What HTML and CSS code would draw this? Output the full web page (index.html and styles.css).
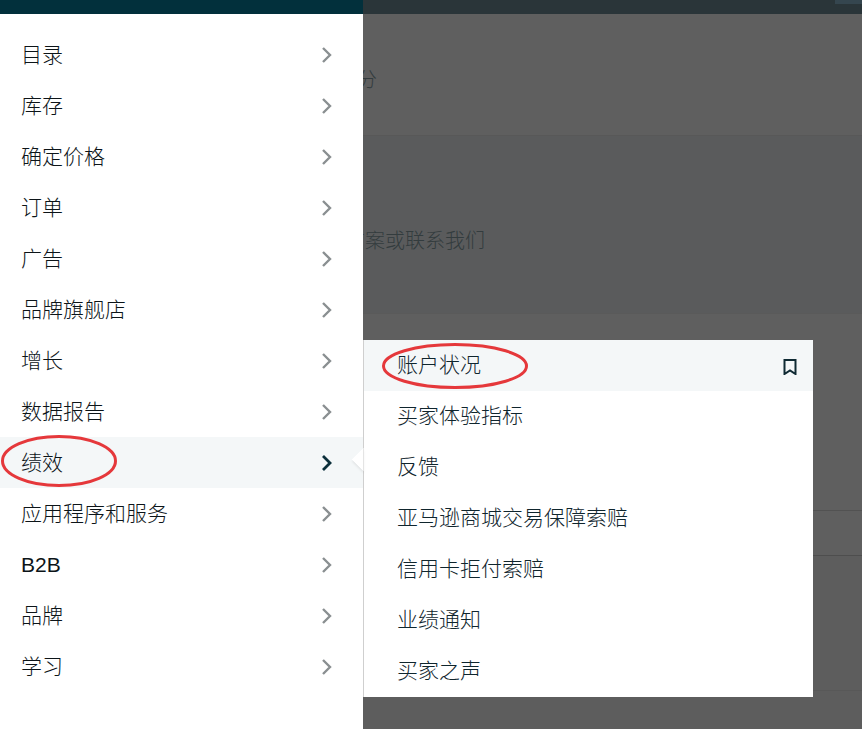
FILE: index.html
```html
<!DOCTYPE html>
<html lang="zh-CN">
<head>
<meta charset="utf-8">
<title>绩效</title>
<link rel="stylesheet" href="styles.css">
</head>
<body>
<div class="page">
  <header class="topbar"><span class="topbar-tab"></span></header>
  <section class="band band-title"><p class="page-text">绩效得分</p></section>
  <section class="band band-help"><p class="page-text">解决方案或联系我们</p></section>
  <section class="band band-plain"></section>
  <section class="band band-row"></section>
  <section class="band band-table"></section>
  <section class="band band-end"></section>
</div>

<nav class="drawer">
  <div class="drawer-cap"></div>
  <ul class="menu">
    <li class="menu-row"><span>目录</span><svg class="chev" viewBox="0 0 12 18"><path d="M2 2l7 7-7 7"/></svg></li>
    <li class="menu-row"><span>库存</span><svg class="chev" viewBox="0 0 12 18"><path d="M2 2l7 7-7 7"/></svg></li>
    <li class="menu-row"><span>确定价格</span><svg class="chev" viewBox="0 0 12 18"><path d="M2 2l7 7-7 7"/></svg></li>
    <li class="menu-row"><span>订单</span><svg class="chev" viewBox="0 0 12 18"><path d="M2 2l7 7-7 7"/></svg></li>
    <li class="menu-row"><span>广告</span><svg class="chev" viewBox="0 0 12 18"><path d="M2 2l7 7-7 7"/></svg></li>
    <li class="menu-row"><span>品牌旗舰店</span><svg class="chev" viewBox="0 0 12 18"><path d="M2 2l7 7-7 7"/></svg></li>
    <li class="menu-row"><span>增长</span><svg class="chev" viewBox="0 0 12 18"><path d="M2 2l7 7-7 7"/></svg></li>
    <li class="menu-row"><span>数据报告</span><svg class="chev" viewBox="0 0 12 18"><path d="M2 2l7 7-7 7"/></svg></li>
    <li class="menu-row is-active"><span>绩效</span><svg class="chev" viewBox="0 0 12 18"><path d="M2 2l7 7-7 7"/></svg></li>
    <li class="menu-row"><span>应用程序和服务</span><svg class="chev" viewBox="0 0 12 18"><path d="M2 2l7 7-7 7"/></svg></li>
    <li class="menu-row"><span>B2B</span><svg class="chev" viewBox="0 0 12 18"><path d="M2 2l7 7-7 7"/></svg></li>
    <li class="menu-row"><span>品牌</span><svg class="chev" viewBox="0 0 12 18"><path d="M2 2l7 7-7 7"/></svg></li>
    <li class="menu-row"><span>学习</span><svg class="chev" viewBox="0 0 12 18"><path d="M2 2l7 7-7 7"/></svg></li>
  </ul>
</nav>

<div class="flyout">
  <span class="notch"></span>
  <ul class="submenu">
    <li class="sub-row is-active"><span>账户状况</span><svg class="mark" viewBox="0 0 14 16"><path d="M1.500 1h11v14l-5.500-3.500-5.500 3.500z"/></svg></li>
    <li class="sub-row"><span>买家体验指标</span></li>
    <li class="sub-row"><span>反馈</span></li>
    <li class="sub-row"><span>亚马逊商城交易保障索赔</span></li>
    <li class="sub-row"><span>信用卡拒付索赔</span></li>
    <li class="sub-row"><span>业绩通知</span></li>
    <li class="sub-row"><span>买家之声</span></li>
  </ul>
</div>

<svg class="ring ring-nav" viewBox="0 0 118 54"><ellipse cx="59" cy="27" rx="56.500" ry="24.500"/></svg>
<svg class="ring ring-sub" viewBox="0 0 148 48"><ellipse cx="74" cy="24" rx="71.500" ry="21.500"/></svg>
</body>
</html>
```

FILE: styles.css
```css
* { box-sizing: border-box; }

html, body {
  margin: 0;
  padding: 0;
  height: 100%;
  overflow: hidden;
  background: #5f5f5f;
  font-family: "Liberation Sans", "Noto Sans CJK SC", sans-serif;
}

ul { list-style: none; margin: 0; padding: 0; }

.page { display: flex; flex-direction: column; height: 729px; }

.topbar { height: 14px; background: #2a3539; flex: none; display: flex; justify-content: flex-end; }
.topbar-tab { width: 27px; height: 4px; background: #35464f; }

.band { flex: none; border-bottom: 1px solid #585858; display: flex; }
.band-title { height: 122px; background: #5f5f5f; padding: 54px 0 0 297px; }
.band-help { height: 178px; background: #5a5b5c; padding: 93px 0 0 305px; border-bottom-color: #5a5a5a; }
.band-plain { height: 197px; background: #5f5f5f; border-bottom-color: #525252; }
.band-row { height: 45px; background: #5f5f5f; border-bottom-color: #4e4e4e; }
.band-table { height: 135px; background: #5d5d5d; border-bottom-color: #585858; }
.band-end { flex: 1; border-bottom: 0; background: #5d5d5d; }

.page-text { margin: 0; font-size: 20px; line-height: 24px; font-weight: 300; color: #333c3e; white-space: nowrap; }

.drawer { position: absolute; top: 0; left: 0; width: 363px; height: 729px; background: #fff; }
.drawer-cap { height: 14px; background: #02303c; }
.menu { padding-top: 15px; }

.menu-row {
  display: flex;
  align-items: center;
  justify-content: space-between;
  height: 51px;
  padding: 0 30px 0 21px;
  font-size: 21px;
  font-weight: 300;
  line-height: 24px;
  color: #0c1418;
}
.menu-row.is-active { background: #f4f7f8; }

.chev { width: 12px; height: 18px; fill: none; stroke: #8a8f91; stroke-width: 2.400; }
.is-active .chev { stroke: #0b2f3b; stroke-width: 2.800; }

.flyout {
  position: absolute;
  top: 340px;
  left: 363px;
  width: 450px;
  height: 357px;
  background: #fff;
  border-left: 1px solid #cfcfcf;
}

.notch {
  position: absolute;
  top: 111px;
  left: -9px;
  width: 17px;
  height: 17px;
  filter: drop-shadow(0 2px 1px rgba(0, 0, 0, 0.07));
}
.notch::before {
  content: "";
  display: block;
  width: 100%;
  height: 100%;
  background: #fff;
  transform: rotate(45deg);
  clip-path: polygon(0 0, 0 100%, 100% 100%);
}

.submenu { position: relative; }

.sub-row {
  display: flex;
  align-items: center;
  justify-content: space-between;
  height: 51px;
  padding: 0 16px 0 33px;
  font-size: 21px;
  font-weight: 300;
  line-height: 24px;
  color: #0f252d;
}
.sub-row span { margin-bottom: 2px; }
.sub-row.is-active { background: #f4f7f8; }

.mark { width: 14px; height: 16px; margin-top: 3px; fill: none; stroke: #0f2a33; stroke-width: 2; }

.ring { position: absolute; fill: none; stroke: #e5383b; stroke-width: 3; pointer-events: none; }
.ring-nav { left: 0; top: 434px; width: 118px; height: 54px; }
.ring-sub { left: 381px; top: 342px; width: 148px; height: 48px; }
```
